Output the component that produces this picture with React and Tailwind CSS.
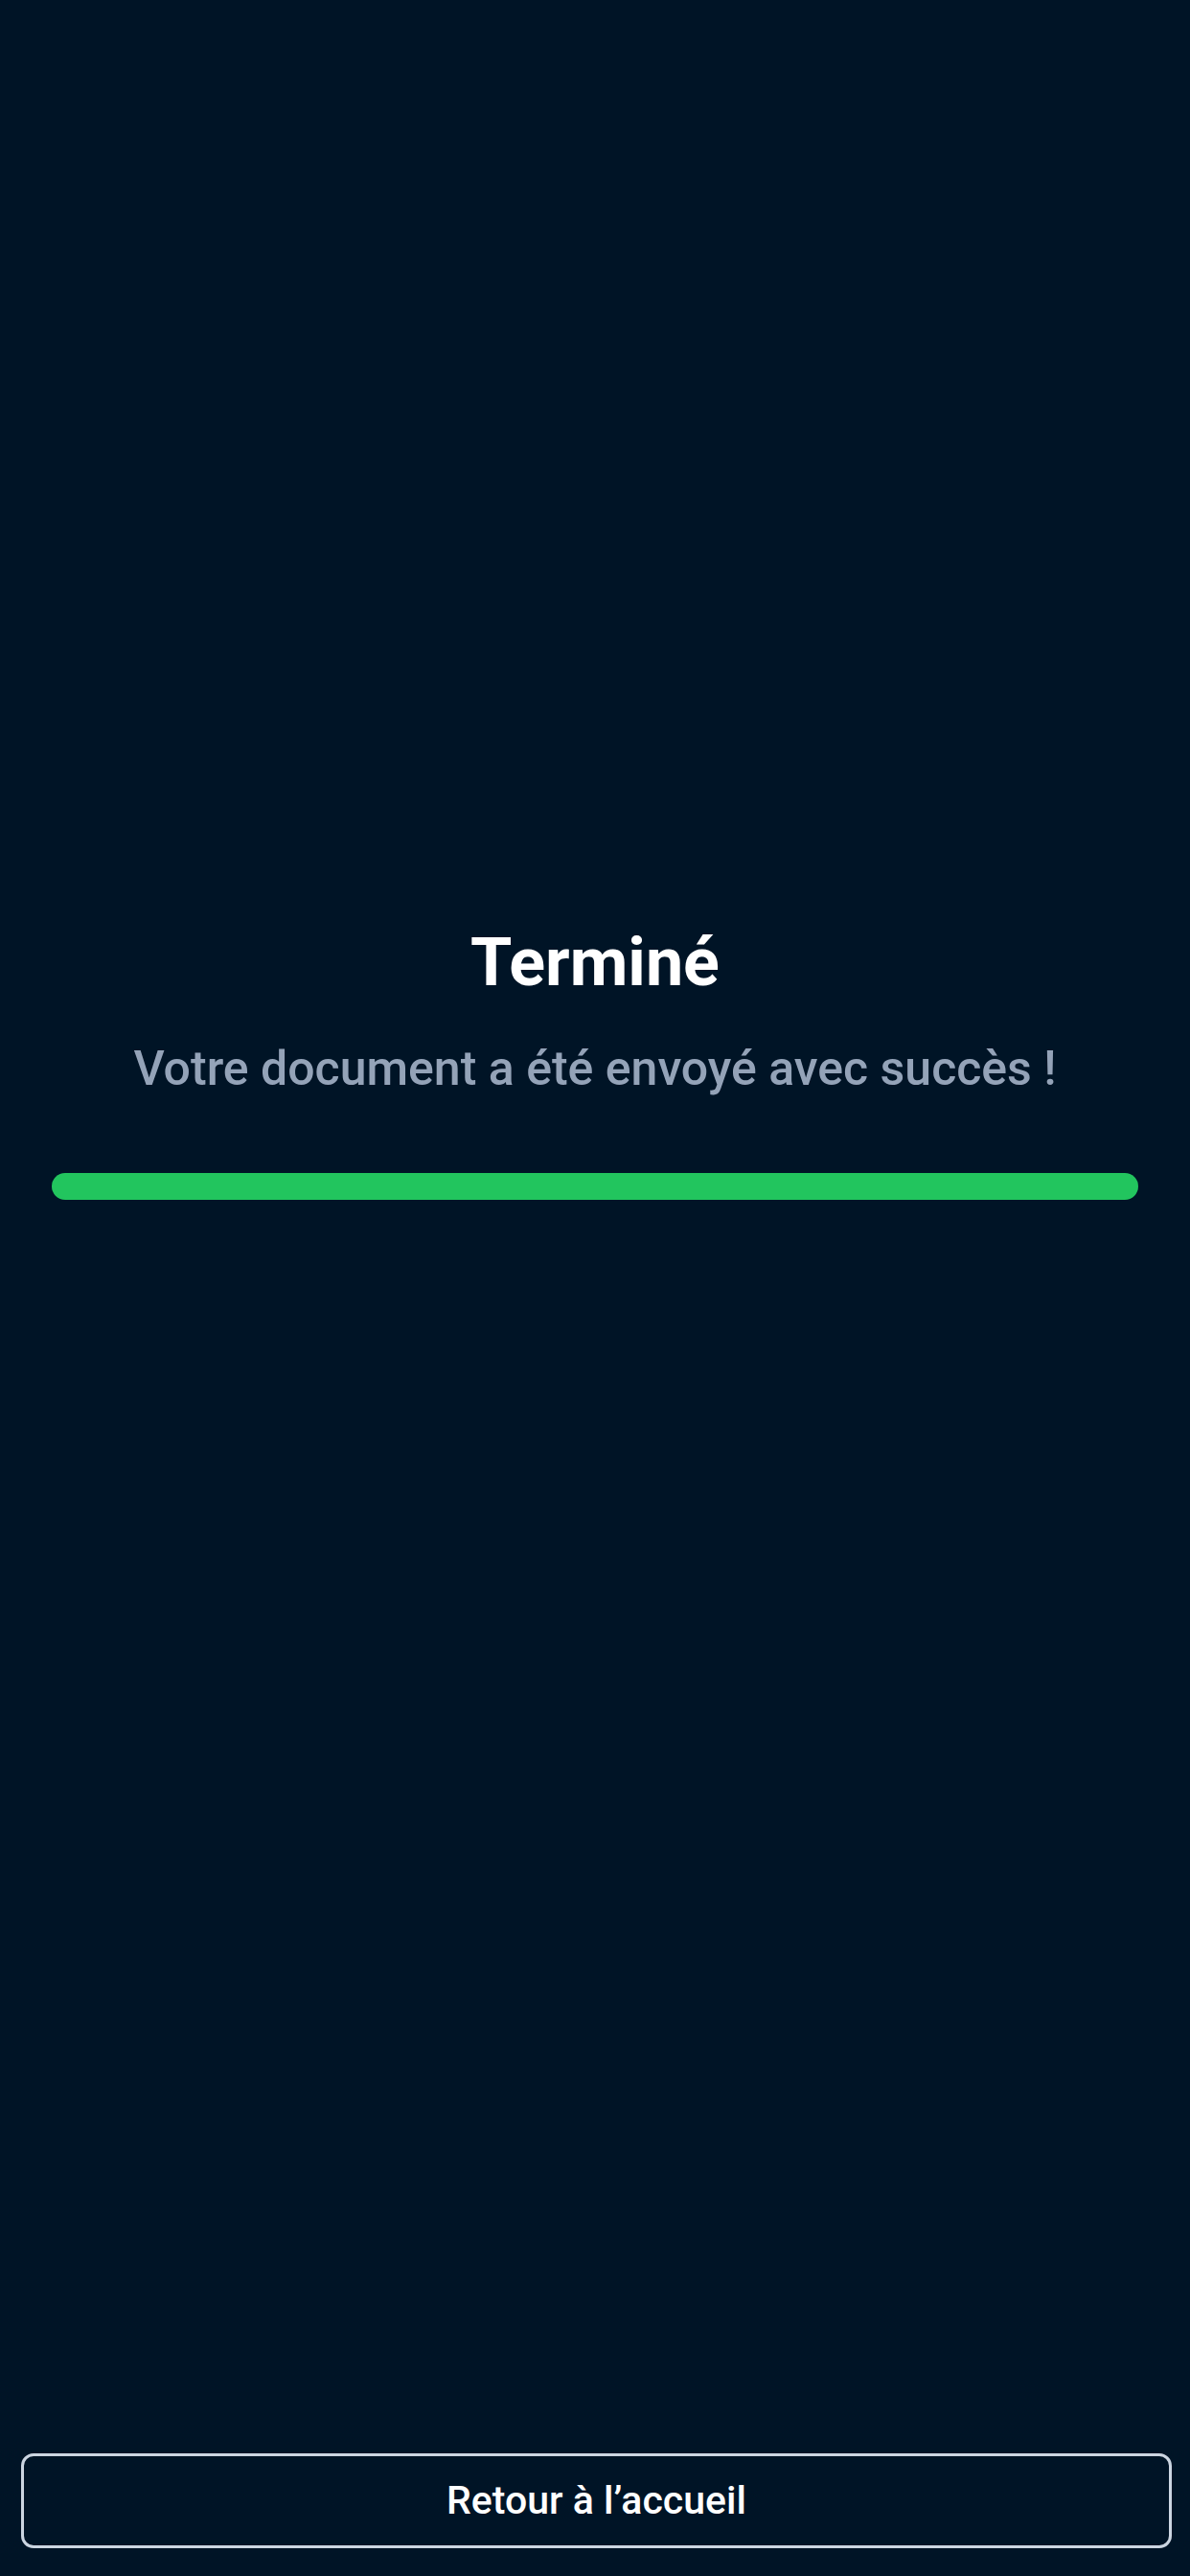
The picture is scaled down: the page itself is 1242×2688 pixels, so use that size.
function App() {
    return (
        <div className="min-h-[2688px] w-full bg-[#001426] flex flex-col font-['Roboto',sans-serif]">
            <div className="flex flex-col items-center pt-[962px] px-[54px]">
                <h1 className="text-[70px] leading-[84px] font-bold text-white">Terminé</h1>
                <p className="mt-[40px] text-[50px] leading-[58px] font-medium text-[#94a3b8]">
                    Votre document a été envoyé avec succès !
                </p>
                <div className="mt-[80px] w-full h-[28px] rounded-full bg-[#22c55e]"></div>
            </div>
            <div className="grow"></div>
            <div className="pl-[22px] pr-[19px] pb-[29px]">
                <button className="w-full h-[99px] rounded-[13px] border-[3px] border-[#cbd5e1] flex items-center justify-center text-[41px] font-medium text-white">
                    Retour à l’accueil
                </button>
            </div>
        </div>
    )
}

export default App;
